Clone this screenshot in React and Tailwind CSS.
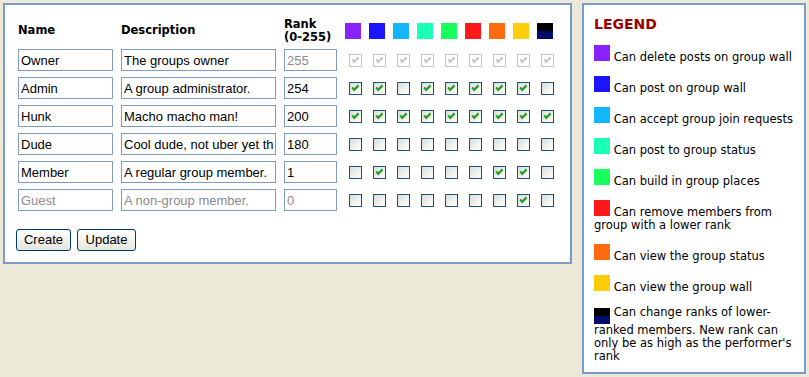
import React from "react";

const SW = [
  "bg-[#8822ff]",
  "bg-[#1b14ff]",
  "bg-[#16b5ff]",
  "bg-[#1affb4]",
  "bg-[#19ff5d]",
  "bg-[#ff1919]",
  "bg-[#ff6b0f]",
  "bg-[#ffcc0a]",
];

function Swatch({ i }) {
  if (i === 8)
    return (
      <span className="inline-flex flex-col w-[16px] h-[16px] align-baseline">
        <span className="block h-[8px] bg-black" />
        <span className="block h-[8px] bg-[#000c6a]" />
      </span>
    );
  return <span className={`inline-block w-[16px] h-[16px] align-baseline ${SW[i]}`} />;
}

function Check({ on, disabled }) {
  return (
    <span
      className={
        "block w-[13px] h-[13px] ml-[4px] border relative " +
        (disabled
          ? "border-[#cac8bb] bg-white"
          : "border-[#1c5180] bg-linear-to-br from-[#dcdcd7] to-white")
      }
    >
      {on && (
        <svg width="11" height="11" viewBox="0 0 11 11" className="absolute left-0 top-0">
          <polyline
            points="2.2,4.6 4.2,6.8 8.6,2.4"
            fill="none"
            stroke={disabled ? "#cac8bb" : "#21a121"}
            strokeWidth="2.2"
          />
        </svg>
      )}
    </span>
  );
}

const rows = [
  { n: "Owner", d: "The groups owner", r: "255", c: [1, 1, 1, 1, 1, 1, 1, 1, 1], rankDis: true, cbDis: true },
  { n: "Admin", d: "A group administrator.", r: "254", c: [1, 1, 0, 1, 1, 1, 1, 1, 0] },
  { n: "Hunk", d: "Macho macho man!", r: "200", c: [1, 1, 1, 1, 1, 1, 1, 1, 1] },
  { n: "Dude", d: "Cool dude, not uber yet though", r: "180", c: [0, 0, 0, 0, 0, 0, 0, 0, 0] },
  { n: "Member", d: "A regular group member.", r: "1", c: [0, 1, 0, 0, 0, 0, 1, 1, 0] },
  { n: "Guest", d: "A non-group member.", r: "0", c: [0, 0, 0, 0, 0, 0, 0, 1, 0], allDis: true },
];

const inputCls =
  "h-[22px] border border-[#7f9db9] bg-white px-[2px] text-[13px] font-['Liberation_Sans',Arial,sans-serif] outline-none";

const grid = "grid grid-cols-[95px_155px_53px_repeat(9,16px)] gap-x-2";

const legend = [
  "Can delete posts on group wall",
  "Can post on group wall",
  "Can accept group join requests",
  "Can post to group status",
  "Can build in group places",
  "Can remove members from group with a lower rank",
  "Can view the group status",
  "Can view the group wall",
  "Can change ranks of lower-ranked members. New rank can only be as high as the performer's rank",
];

export default function App() {
  return (
    <div className="min-h-screen w-full bg-[#ece9d8] p-[3px] flex items-start gap-[10px] font-['DejaVu_Sans',Verdana,sans-serif]">
      <div className="w-[569px] h-[261px] border-2 border-[#7a9cc8] bg-white pt-[13px] pl-[13px]">
        <div className={`${grid} h-[26px] items-center text-[11.5px] font-bold text-black`}>
          <div>Name</div>
          <div>Description</div>
          <div className="leading-[13px]">
            Rank
            <br />
            (0-255)
          </div>
          {Array.from({ length: 9 }).map((_, i) => (
            <div key={i} className="flex">
              <Swatch i={i} />
            </div>
          ))}
        </div>
        <div className="mt-[5px] flex flex-col gap-[6px]">
          {rows.map((r) => (
            <div key={r.n} className={`${grid} items-center`}>
              <input
                readOnly
                value={r.n}
                className={`${inputCls} w-[95px] ${r.allDis ? "text-[#8c8c8c]" : "text-black"}`}
              />
              <input
                readOnly
                value={r.d}
                className={`${inputCls} w-[155px] ${r.allDis ? "text-[#8c8c8c]" : "text-black"}`}
              />
              <input
                readOnly
                value={r.r}
                className={`${inputCls} w-[53px] ${r.allDis || r.rankDis ? "text-[#8c8c8c]" : "text-black"}`}
              />
              {r.c.map((v, i) => (
                <div key={i} className="w-[16px]">
                  <Check on={!!v} disabled={r.cbDis} />
                </div>
              ))}
            </div>
          ))}
        </div>
        <div className="mt-[18px] -ml-[2px] flex gap-[6px] font-['Liberation_Sans',Arial,sans-serif] text-[13px] text-black">
          <button className="h-[22px] w-[55px] rounded-[3px] border border-[#003c74] bg-linear-to-b from-white to-[#e6e5dc]">
            Create
          </button>
          <button className="h-[22px] w-[59px] rounded-[3px] border border-[#003c74] bg-linear-to-b from-white to-[#e6e5dc]">
            Update
          </button>
        </div>
      </div>
      <div className="w-[224px] h-[371px] border-2 border-[#7a9cc8] bg-white pt-[11px] px-[10px]">
        <div className="text-[14px] leading-[17px] font-bold text-[#990000]">LEGEND</div>
        <div className="mt-[12px] flex flex-col gap-[12px] text-[11.5px] leading-[13px] text-black">
          {legend.map((t, i) => (
            <div key={i}>
              <Swatch i={i} /> {t}
            </div>
          ))}
        </div>
      </div>
    </div>
  );
}
